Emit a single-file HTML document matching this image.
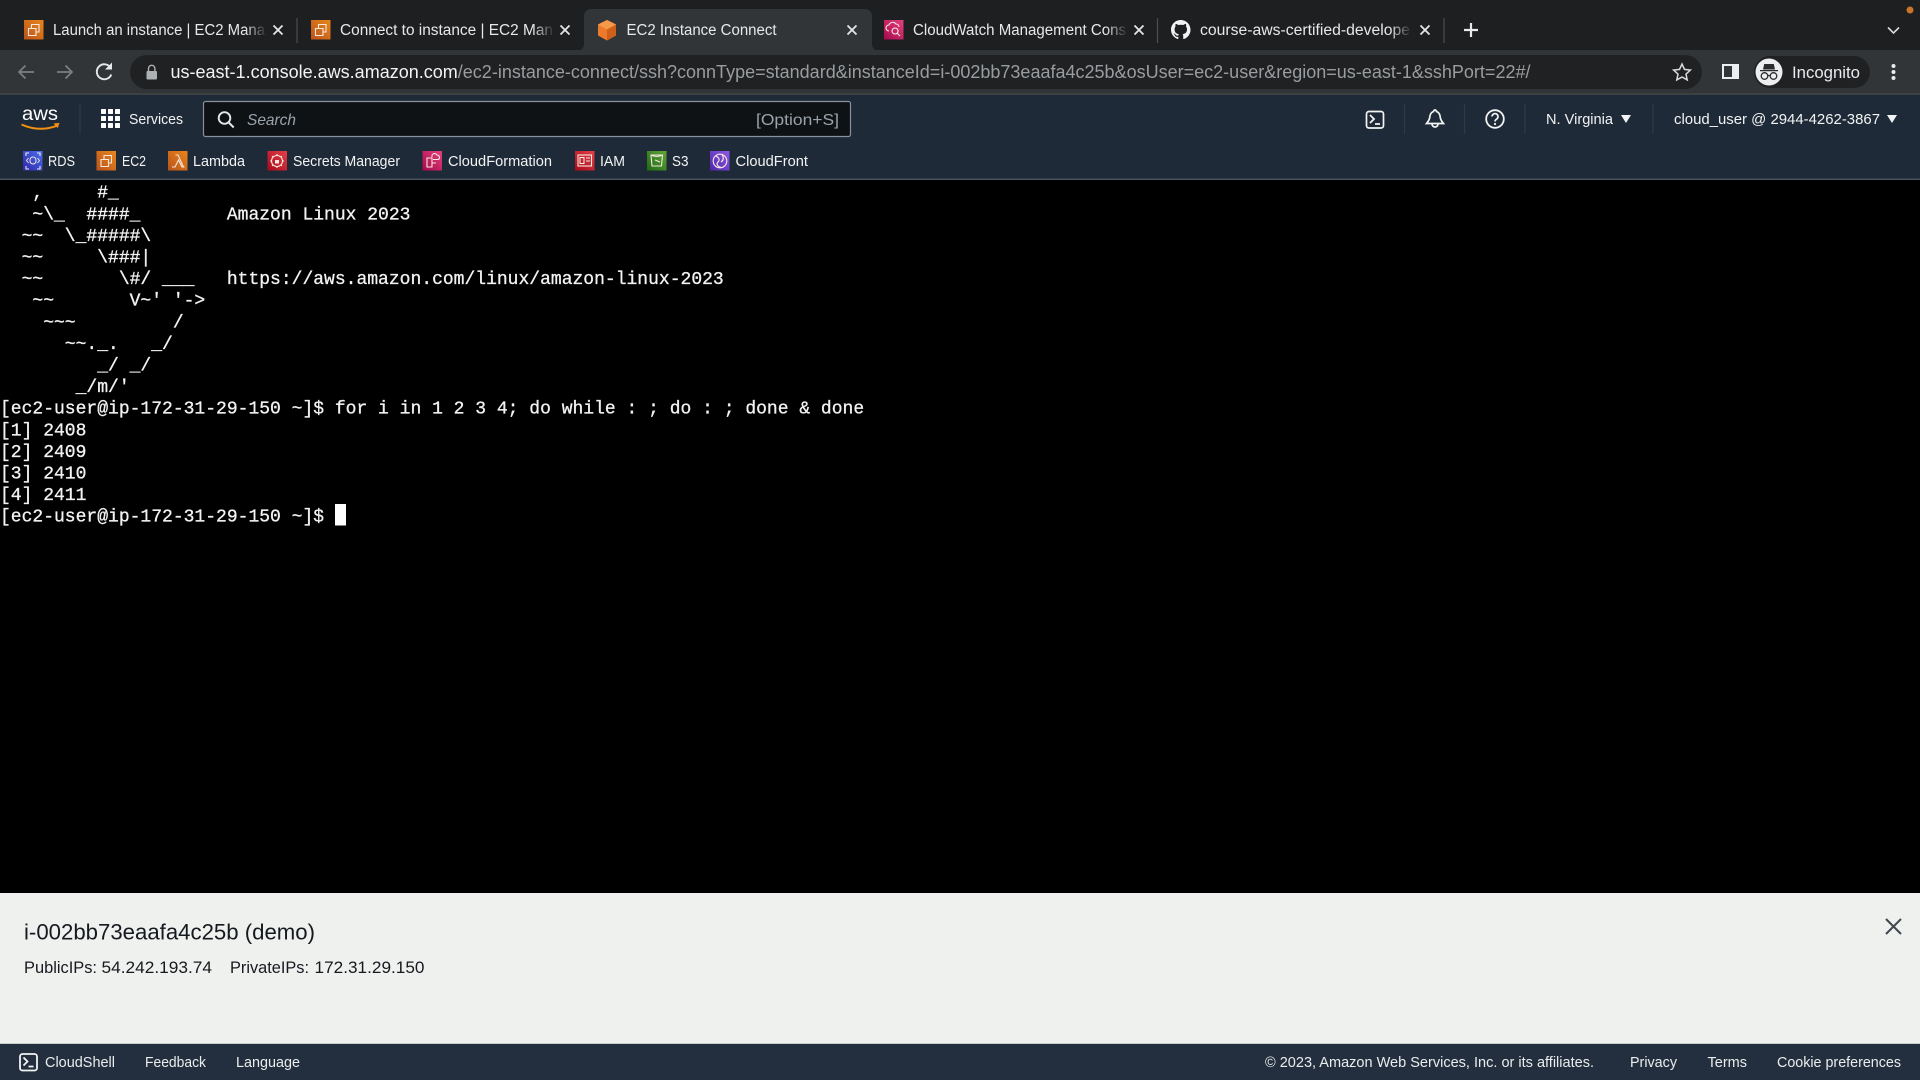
<!DOCTYPE html>
<html lang="en"><head><meta charset="utf-8"><title>EC2 Instance Connect</title>
<style>
html,body{margin:0;padding:0;background:#000;width:1920px;height:1080px;overflow:hidden}
svg{display:block;position:absolute;left:0;top:0}
text{font-family:"Liberation Sans",sans-serif;white-space:pre}
.tab{font-size:15.5px;fill:#e6e8ea}
.url{font-size:18px}
.nav{font-size:15px;fill:#f2f3f3}
.sc{font-size:14.5px;fill:#f2f3f3}
.term{font-family:"Liberation Mono",monospace;font-size:18px;fill:#f2f2f2;stroke:#f2f2f2;stroke-width:.3px}
.foot{font-size:14.5px;fill:#eaeded}
.ic{fill:none;stroke:#f4e8df;stroke-width:1.100}
.x{stroke:#e4e6e8;stroke-width:1.800;fill:none}
.sep{stroke:#4b4e52;stroke-width:1.200}
.ndiv{stroke:#2f3a48;stroke-width:1.200}
</style></head><body>
<svg width="1920" height="1080" viewBox="0 0 1920 1080" xmlns="http://www.w3.org/2000/svg">
<defs>
<linearGradient id="or" x1="0" y1="1" x2="1" y2="0"><stop offset="0" stop-color="#b9531c"/><stop offset="1" stop-color="#e8861c"/></linearGradient>
<linearGradient id="bl" x1="0" y1="1" x2="1" y2="0"><stop offset="0" stop-color="#2e27ad"/><stop offset="1" stop-color="#4a6fe8"/></linearGradient>
<linearGradient id="rd" x1="0" y1="1" x2="1" y2="0"><stop offset="0" stop-color="#a80a1a"/><stop offset="1" stop-color="#e43f4a"/></linearGradient>
<linearGradient id="pk" x1="0" y1="1" x2="1" y2="0"><stop offset="0" stop-color="#a50a4c"/><stop offset="1" stop-color="#e63f7d"/></linearGradient>
<linearGradient id="gr" x1="0" y1="1" x2="1" y2="0"><stop offset="0" stop-color="#1f6a14"/><stop offset="1" stop-color="#63a53a"/></linearGradient>
<linearGradient id="pu" x1="0" y1="1" x2="1" y2="0"><stop offset="0" stop-color="#4d27a8"/><stop offset="1" stop-color="#8f58e6"/></linearGradient>
<linearGradient id="fadeS" x1="0" x2="1"><stop offset="0" stop-color="#1d1f21" stop-opacity="0"/><stop offset="1" stop-color="#1d1f21"/></linearGradient>
<g id="ec2"><rect width="19.500" height="19.500" fill="url(#or)"/><path class="ic" d="M4.500 8.500h7.500v7H4.500zM7.500 8.500V4.500h7.500v7.500H12"/></g>
</defs>

<!-- tab strip -->
<rect width="1920" height="51" fill="#1d1f21"/>
<rect y="50" width="1920" height="45" fill="#323537"/>
<path d="M576 51q8 0 8-8V17q0-8 8-8H864q8 0 8 8V43q0 8 8 8z" fill="#323537"/>

<use href="#ec2" x="24" y="20"/>
<text class="tab" x="53" y="35" textLength="212" lengthAdjust="spacingAndGlyphs">Launch an instance | EC2 Mana</text>
<rect x="245" y="18" width="22" height="24" fill="url(#fadeS)"/>
<path class="x" d="M273.500 25.500l9 9m0-9l-9 9"/>
<line class="sep" x1="297" y1="18" x2="297" y2="43"/>
<use href="#ec2" x="311" y="20"/>
<text class="tab" x="340" y="35" textLength="213" lengthAdjust="spacingAndGlyphs">Connect to instance | EC2 Man</text>
<rect x="533" y="18" width="22" height="24" fill="url(#fadeS)"/>
<path class="x" d="M560.500 25.500l9 9m0-9l-9 9"/>

<path d="M607 20l9 4.500v11l-9 5-9-5v-11z" fill="#ec7a2a"/><path d="M607 20l9 4.500-9 5-9-5z" fill="#f59a48"/><path d="M607 29.500l9-5v11l-9 5z" fill="#cf5f1a"/>
<text class="tab" x="626.500" y="35" textLength="150" lengthAdjust="spacingAndGlyphs">EC2 Instance Connect</text>
<path class="x" d="M847.500 25.500l9 9m0-9l-9 9"/>

<rect x="884" y="20" width="19.500" height="19.500" fill="url(#pk)"/>
<path class="ic" d="M889 31a3 3 0 0 1 0-6 4 4 0 0 1 7-1 3 3 0 0 1 3 3M895 28a3 3 0 1 0 .1 0M897 33l3 3"/>
<text class="tab" x="913" y="35" textLength="213" lengthAdjust="spacingAndGlyphs">CloudWatch Management Cons</text>
<rect x="1106" y="18" width="22" height="24" fill="url(#fadeS)"/>
<path class="x" d="M1134.500 25.500l9 9m0-9l-9 9"/>
<line class="sep" x1="1157.500" y1="18" x2="1157.500" y2="43"/>
<path fill="#f0f2f4" fill-rule="evenodd" transform="translate(1171 20) scale(1.22)" d="M8 0C3.580 0 0 3.580 0 8c0 3.540 2.290 6.530 5.470 7.590.4.070.55-.170.55-.380 0-.190-.010-.820-.010-1.490-2.010.370-2.530-.490-2.690-.940-.090-.230-.480-.940-.820-1.130-.280-.150-.680-.520-.010-.530.630-.010 1.080.580 1.230.820.720 1.210 1.870.870 2.330.660.070-.520.280-.870.510-1.070-1.780-.200-3.640-.890-3.640-3.950 0-.870.310-1.590.820-2.150-.080-.200-.360-1.020.080-2.120 0 0 .670-.210 2.200.820.640-.180 1.320-.270 2-.270s1.360.090 2 .270c1.530-1.040 2.200-.820 2.200-.820.440 1.100.160 1.920.080 2.120.510.560.820 1.270.820 2.150 0 3.070-1.870 3.750-3.650 3.950.290.250.540.730.540 1.480 0 1.070-.010 1.930-.010 2.200 0 .210.150.460.550.380A8.013 8.013 0 0 0 16 8c0-4.420-3.580-8-8-8z"/>
<text class="tab" x="1200" y="35" textLength="210" lengthAdjust="spacingAndGlyphs">course-aws-certified-develope</text>
<rect x="1390" y="18" width="22" height="24" fill="url(#fadeS)"/>
<path class="x" d="M1420.500 25.500l9 9m0-9l-9 9"/>
<line class="sep" x1="1444" y1="18" x2="1444" y2="43"/>
<path d="M1471 23v14M1464 30h14" stroke="#e8eaed" stroke-width="2.200" fill="none"/>
<path d="M1888 27.500l5.500 5.500 5.500-5.500" stroke="#d8dadc" stroke-width="1.600" fill="none"/>
<circle cx="1910" cy="10" r="3.500" fill="#c8742a"/>

<!-- toolbar -->
<line x1="0" x2="1920" y1="94" y2="94" stroke="#4a4c4e" stroke-width="1"/>
<path d="M34 72H19M25.500 65.500L19 72l6.500 6.500" stroke="#7c7f82" stroke-width="1.700" fill="none"/>
<path d="M57 72h15M65.500 65.500L72 72l-6.500 6.500" stroke="#7c7f82" stroke-width="1.700" fill="none"/>
<path d="M110.500 67.500a7.500 7.500 0 1 0 .8 7" stroke="#e6e8ea" stroke-width="1.900" fill="none"/><path d="M112 62.500v7h-7z" fill="#e6e8ea"/>
<rect x="130" y="55" width="1572" height="34" rx="17" fill="#1f2123"/>
<rect x="146.500" y="71" width="10.500" height="8.500" rx="1" fill="#aeb1b4"/><path d="M148.500 71v-2.500a3.200 3.200 0 0 1 6.400 0V71" stroke="#aeb1b4" stroke-width="1.400" fill="none"/>
<text class="url" x="170.500" y="78" textLength="1360" lengthAdjust="spacingAndGlyphs"><tspan fill="#f1f3f4">us-east-1.console.aws.amazon.com</tspan><tspan fill="#9a9d9f">/ec2-instance-connect/ssh?connType=standard&amp;instanceId=i-002bb73eaafa4c25b&amp;osUser=ec2-user&amp;region=us-east-1&amp;sshPort=22#/</tspan></text>
<path d="M1682 64l2.500 5.400 5.900.7-4.400 4 1.200 5.800-5.200-2.900-5.200 2.900 1.200-5.800-4.400-4 5.900-.7z" stroke="#d8dadc" stroke-width="1.500" fill="none"/>
<path d="M1722 64h17v15h-17zM1724 66v11h8V66z" fill="#eceef0" fill-rule="evenodd"/>
<rect x="1754" y="56" width="116" height="32" rx="16" fill="#1f2123"/>
<circle cx="1769" cy="72" r="13.500" fill="#eceef0"/>
<path d="M1760 70h18v1.300h-18zM1763 69.500l1.200-5.500h9.600l1.200 5.500z" fill="#2a2c2e"/>
<circle cx="1764.500" cy="76" r="3.300" fill="none" stroke="#2a2c2e" stroke-width="1.300"/><circle cx="1773.500" cy="76" r="3.300" fill="none" stroke="#2a2c2e" stroke-width="1.300"/><path d="M1767.800 75.500h2.400" stroke="#2a2c2e" stroke-width="1.200"/>
<text x="1792" y="78" font-size="16.500" fill="#e8eaed" textLength="68" lengthAdjust="spacingAndGlyphs">Incognito</text>
<circle cx="1893.500" cy="66" r="2" fill="#e8eaed"/><circle cx="1893.500" cy="72" r="2" fill="#e8eaed"/><circle cx="1893.500" cy="78" r="2" fill="#e8eaed"/>

<!-- aws nav -->
<rect y="95" width="1920" height="84" fill="#1f2a38"/>
<rect y="178.500" width="1920" height="1.500" fill="#4a535d"/>
<text x="22" y="120" font-size="19.500" fill="#fff" textLength="36" lengthAdjust="spacingAndGlyphs">aws</text>
<path d="M21.500 124.500q18 8 36 1" stroke="#f29111" stroke-width="2" fill="none"/><path d="M53.500 123.500l6-.6-1.800 5.200z" fill="#f29111"/>
<line class="ndiv" x1="80" y1="104" x2="80" y2="134"/>
<g fill="#fff"><rect x="101" y="109" width="5" height="5" rx=".6"/><rect x="108" y="109" width="5" height="5" rx=".6"/><rect x="115" y="109" width="5" height="5" rx=".6"/><rect x="101" y="116" width="5" height="5" rx=".6"/><rect x="108" y="116" width="5" height="5" rx=".6"/><rect x="115" y="116" width="5" height="5" rx=".6"/><rect x="101" y="123" width="5" height="5" rx=".6"/><rect x="108" y="123" width="5" height="5" rx=".6"/><rect x="115" y="123" width="5" height="5" rx=".6"/></g>
<text class="nav" x="129" y="124" textLength="54" lengthAdjust="spacingAndGlyphs">Services</text>
<rect x="203.500" y="101.500" width="647" height="35" rx="2" fill="#0f1215" stroke="#87919c" stroke-width="1.200"/>
<circle cx="224.500" cy="118" r="5.800" fill="none" stroke="#e4e6e8" stroke-width="1.900"/><path d="M228.700 122.500l5 5" stroke="#e4e6e8" stroke-width="2"/>
<text x="247" y="125" font-size="16" font-style="italic" fill="#9aa3ab" textLength="49" lengthAdjust="spacingAndGlyphs">Search</text>
<text x="756" y="125" font-size="16" fill="#9aa3ab" textLength="83" lengthAdjust="spacingAndGlyphs">[Option+S]</text>

<rect x="1366.500" y="111.500" width="17" height="16.500" rx="2.500" fill="none" stroke="#f2f3f3" stroke-width="1.700"/><path d="M1370 115l4 4-4 4M1375 124h5" stroke="#f2f3f3" stroke-width="1.800" fill="none"/>
<line class="ndiv" x1="1404.500" y1="104" x2="1404.500" y2="134"/>
<path d="M1435 110a1.500 1.500 0 0 1 1.500 1.500c3 1 3.600 3.500 3.800 6 .2 2.300 1.700 4.200 3.200 6h-17c1.500-1.800 3-3.700 3.200-6 .2-2.500.8-5 3.800-6a1.500 1.500 0 0 1 1.500-1.500zM1432 124a3 3 0 0 0 6 0" stroke="#f2f3f3" stroke-width="1.700" fill="none"/>
<line class="ndiv" x1="1464.500" y1="104" x2="1464.500" y2="134"/>
<circle cx="1495" cy="119" r="8.800" fill="none" stroke="#f2f3f3" stroke-width="1.800"/><path d="M1492 116.500a3 3 0 1 1 4.500 2.700c-1 .6-1.500 1.100-1.500 2.300" stroke="#f2f3f3" stroke-width="1.700" fill="none"/><circle cx="1495" cy="124" r="1.100" fill="#f2f3f3"/>
<line class="ndiv" x1="1525" y1="104" x2="1525" y2="134"/>
<text class="nav" x="1546" y="124" textLength="67" lengthAdjust="spacingAndGlyphs">N. Virginia</text>
<path d="M1621 115h10l-5 8z" fill="#f2f3f3"/>
<line class="ndiv" x1="1653" y1="104" x2="1653" y2="134"/>
<text class="nav" x="1674" y="124" textLength="206" lengthAdjust="spacingAndGlyphs">cloud_user @ 2944-4262-3867</text>
<path d="M1887 115h10l-5 8z" fill="#f2f3f3"/>

<!-- shortcuts -->
<rect x="23" y="151" width="19.500" height="19.500" fill="url(#bl)"/>
<path class="ic" d="M26 156v-3h3M40 156v-3h-3M26 166v3h3M40 166v3h-3" stroke-width="1"/><rect x="30" y="157" width="6" height="7" rx="3" fill="none" stroke="#f4e8df" stroke-width="1"/><path d="M28.500 158l-2 2.500 2 2.500M37.500 158l2 2.500-2 2.500" stroke="#f4e8df" stroke-width=".9" fill="none"/>
<text class="sc" x="48" y="166" textLength="27" lengthAdjust="spacingAndGlyphs">RDS</text>
<use href="#ec2" x="96.500" y="151"/>
<text class="sc" x="122" y="166" textLength="24" lengthAdjust="spacingAndGlyphs">EC2</text>
<rect x="168" y="151" width="19.500" height="19.500" fill="url(#or)"/><path class="ic" d="M172 167h3l3.500-7 3.500 7h2.500M175.500 155h2.500l5.500 12" stroke-width="1.200"/>
<text class="sc" x="193" y="166" textLength="52" lengthAdjust="spacingAndGlyphs">Lambda</text>
<rect x="267.500" y="151" width="19.500" height="19.500" fill="url(#rd)"/><circle cx="277" cy="161" r="5.500" class="ic" stroke-width=".9"/><rect x="275" y="160" width="4" height="3.500" fill="#f4e8df"/><path class="ic" d="M277 154v1.500M277 166.500v1.500M270 161h1.500M282.500 161h1.500M272 156l1 1M282 156l-1 1M272 166l1-1M282 166l-1-1" stroke-width=".9"/>
<text class="sc" x="293" y="166" textLength="107" lengthAdjust="spacingAndGlyphs">Secrets Manager</text>
<rect x="422.500" y="151" width="19.500" height="19.500" fill="url(#pk)"/><path class="ic" d="M427 158v9h5v-9zM432 157a3 3 0 0 1 2-3.500 3.500 3.500 0 0 1 3 1.500 2.500 2.500 0 0 1 1.500 4.500H433M432 163h4" stroke-width="1"/>
<text class="sc" x="448" y="166" textLength="104" lengthAdjust="spacingAndGlyphs">CloudFormation</text>
<rect x="575" y="151" width="19.500" height="19.500" fill="url(#rd)"/><rect x="578" y="155" width="13.500" height="11" class="ic" stroke-width="1"/><rect x="580" y="157.500" width="4" height="6" class="ic" stroke-width=".9"/><path class="ic" d="M586 158h4M586 161h4" stroke-width=".9"/>
<text class="sc" x="600" y="166" textLength="25" lengthAdjust="spacingAndGlyphs">IAM</text>
<rect x="647" y="151" width="19.500" height="19.500" fill="url(#gr)"/><path class="ic" d="M651 155h11.500l-1 11h-9.500zM651 155q5.700 3 11.500 0M655 160l5 2" stroke-width="1"/>
<text class="sc" x="672" y="166" textLength="16.500" lengthAdjust="spacingAndGlyphs">S3</text>
<rect x="710" y="151" width="19.500" height="19.500" fill="url(#pu)"/><circle cx="720" cy="161" r="6.800" class="ic" stroke-width="1"/><path class="ic" d="M716 156q5 3 2 6t3 5.500M722 154.500q3 5-1 7.500" stroke-width=".9"/>
<text class="sc" x="735.500" y="166" textLength="72.500" lengthAdjust="spacingAndGlyphs">CloudFront</text>

<!-- terminal -->
<rect y="180" width="1920" height="713" fill="#000"/>
<text class="term" x="0" y="197.700">   ,     #_</text>
<text class="term" x="0" y="219.300">   ~\_  ####_        Amazon Linux 2023</text>
<text class="term" x="0" y="240.900">  ~~  \_#####\</text>
<text class="term" x="0" y="262.500">  ~~     \###|</text>
<text class="term" x="0" y="284.100">  ~~       \#/ ___   https://aws.amazon.com/linux/amazon-linux-2023</text>
<text class="term" x="0" y="305.700">   ~~       V~' '-&gt;</text>
<text class="term" x="0" y="327.300">    ~~~         /</text>
<text class="term" x="0" y="348.900">      ~~._.   _/</text>
<text class="term" x="0" y="370.500">         _/ _/</text>
<text class="term" x="0" y="392.100">       _/m/'</text>
<text class="term" x="0" y="413.700">[ec2-user@ip-172-31-29-150 ~]$ for i in 1 2 3 4; do while : ; do : ; done &amp; done</text>
<text class="term" x="0" y="435.300">[1] 2408</text>
<text class="term" x="0" y="456.900">[2] 2409</text>
<text class="term" x="0" y="478.500">[3] 2410</text>
<text class="term" x="0" y="500.100">[4] 2411</text>
<text class="term" x="0" y="521.700">[ec2-user@ip-172-31-29-150 ~]$ </text>
<rect x="335" y="504" width="11" height="21.500" fill="#fff"/>

<!-- panel -->
<rect y="893" width="1920" height="150" fill="#eff1ef"/>
<text x="24" y="939.500" font-size="22.500" fill="#16191f" textLength="291" lengthAdjust="spacingAndGlyphs">i-002bb73eaafa4c25b (demo)</text>
<text x="24" y="973" font-size="17" fill="#16191f" textLength="73" lengthAdjust="spacingAndGlyphs">PublicIPs:</text>
<text x="101.500" y="973" font-size="17" fill="#16191f" textLength="110.500" lengthAdjust="spacingAndGlyphs">54.242.193.74</text>
<text x="230" y="973" font-size="17" fill="#16191f" textLength="79" lengthAdjust="spacingAndGlyphs">PrivateIPs:</text>
<text x="314.500" y="973" font-size="17" fill="#16191f" textLength="110" lengthAdjust="spacingAndGlyphs">172.31.29.150</text>
<path d="M1886 919l15 15m0-15l-15 15" stroke="#414750" stroke-width="2" fill="none"/>

<!-- footer -->
<rect y="1043" width="1920" height="37" fill="#232f3e"/>
<rect y="1043" width="1920" height="1" fill="#c8cccc"/>
<rect x="20" y="1054" width="17" height="16.500" rx="2.500" fill="none" stroke="#f2f3f3" stroke-width="1.800"/><path d="M23.500 1057.500l4 4-4 4M28.500 1066.500h5" stroke="#f2f3f3" stroke-width="1.800" fill="none"/>
<text class="foot" x="45" y="1067" textLength="70" lengthAdjust="spacingAndGlyphs">CloudShell</text>
<text class="foot" x="145" y="1067" textLength="61" lengthAdjust="spacingAndGlyphs">Feedback</text>
<text class="foot" x="236" y="1067" textLength="64" lengthAdjust="spacingAndGlyphs">Language</text>
<text class="foot" x="1265" y="1067" textLength="329" lengthAdjust="spacingAndGlyphs">© 2023, Amazon Web Services, Inc. or its affiliates.</text>
<text class="foot" x="1630" y="1067" textLength="47" lengthAdjust="spacingAndGlyphs">Privacy</text>
<text class="foot" x="1707.500" y="1067" textLength="39.500" lengthAdjust="spacingAndGlyphs">Terms</text>
<text class="foot" x="1777" y="1067" textLength="124" lengthAdjust="spacingAndGlyphs">Cookie preferences</text>
</svg>
</body></html>
